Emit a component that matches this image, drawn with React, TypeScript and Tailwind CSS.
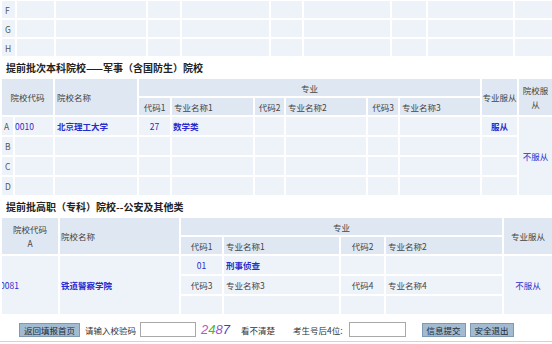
import React from 'react'

// cell backgrounds
const TD = 'border-2 border-white bg-[#eef3fa] p-0 align-middle'
const TH = 'border-2 border-white bg-[#dfe8f2] p-0 font-normal text-[#444] align-middle'
const LINK = 'text-[#2a2acc]'

function TopRows() {
  const widths = [15, 39, 92, 34, 89, 33, 88, 36, 87, 39]
  return (
    <table className="table-fixed border-collapse w-[552px] -mt-[1px]">
      <colgroup>
        {widths.map((w, i) => (
          <col key={i} style={{ width: w }} />
        ))}
      </colgroup>
      <tbody>
        {['F', 'G', 'H'].map((l) => (
          <tr key={l} className="h-[19px]">
            <td className={`${TD} pl-[3px] text-[#555]`}>{l}</td>
            {widths.slice(1).map((_, i) => (
              <td key={i} className={TD} />
            ))}
          </tr>
        ))}
      </tbody>
    </table>
  )
}

function Title({ children }: { children: React.ReactNode }) {
  return (
    <div className="h-[19px] flex items-center pl-[6px] text-[10px] font-bold text-[#222]">
      {children}
    </div>
  )
}

function MilitaryTable() {
  const widths = [13, 40, 84, 33, 83, 31, 82, 32, 82, 37, 35]
  const emptyRow = (l: string) => (
    <tr key={l} className="h-[20px]">
      <td className={`${TD} pl-[3px] text-[#555]`}>{l}</td>
      {[0, 1, 2, 3, 4, 5, 6, 7, 8].map((i) => (
        <td key={i} className={TD} />
      ))}
    </tr>
  )
  return (
    <table className="table-fixed border-collapse w-[552px]">
      <colgroup>
        {widths.map((w, i) => (
          <col key={i} style={{ width: w }} />
        ))}
      </colgroup>
      <thead>
        <tr className="h-[19px]">
          <th rowSpan={2} colSpan={2} className={`${TH} text-center`}>院校代码</th>
          <th rowSpan={2} className={`${TH} text-left pl-[2px]`}>院校名称</th>
          <th colSpan={6} className={`${TH} text-center`}>专业</th>
          <th rowSpan={2} className={`${TH} text-center`}>专业服从</th>
          <th rowSpan={2} className={`${TH} text-center px-[2px] leading-[14px]`}>院校服从</th>
        </tr>
        <tr className="h-[19px]">
          <th className={`${TH} text-center`}>代码1</th>
          <th className={`${TH} text-left pl-[2px]`}>专业名称1</th>
          <th className={`${TH} text-center`}>代码2</th>
          <th className={`${TH} text-left pl-[2px]`}>专业名称2</th>
          <th className={`${TH} text-center`}>代码3</th>
          <th className={`${TH} text-left pl-[2px]`}>专业名称3</th>
        </tr>
      </thead>
      <tbody>
        <tr className="h-[20px]">
          <td className={`${TD} pl-[2px] text-[#555]`}>A</td>
          <td className={`${TD} ${LINK}`}>0010</td>
          <td className={`${TD} ${LINK} pl-[2px] font-bold`}>北京理工大学</td>
          <td className={`${TD} ${LINK} text-center`}>27</td>
          <td className={`${TD} ${LINK} pl-[1px] font-bold`}>数学类</td>
          <td className={TD} />
          <td className={TD} />
          <td className={TD} />
          <td className={TD} />
          <td className={`${TD} ${LINK} text-center font-bold`}>服从</td>
          <td rowSpan={4} className={`${TD} ${LINK} text-center`}>不服从</td>
        </tr>
        {['B', 'C', 'D'].map(emptyRow)}
      </tbody>
    </table>
  )
}

function PoliceTable() {
  const widths = [58, 121, 43, 117, 45, 118, 50]
  return (
    <table className="table-fixed border-collapse w-[552px]">
      <colgroup>
        {widths.map((w, i) => (
          <col key={i} style={{ width: w }} />
        ))}
      </colgroup>
      <thead>
        <tr className="h-[19px]">
          <th rowSpan={2} className={`${TH} text-center leading-[14px]`}>
            院校代码
            <br />A
          </th>
          <th rowSpan={2} className={`${TH} text-left pl-[1px]`}>院校名称</th>
          <th colSpan={4} className={`${TH} text-center`}>专业</th>
          <th rowSpan={2} className={`${TH} text-center`}>专业服从</th>
        </tr>
        <tr className="h-[19px]">
          <th className={`${TH} text-center`}>代码1</th>
          <th className={`${TH} text-left pl-[2px]`}>专业名称1</th>
          <th className={`${TH} text-center`}>代码2</th>
          <th className={`${TH} text-left pl-[2px]`}>专业名称2</th>
        </tr>
      </thead>
      <tbody>
        <tr className="h-[20px]">
          <td rowSpan={3} className={`${TD} ${LINK} overflow-hidden`}>
            <span className="-ml-[2px]">0081</span>
          </td>
          <td rowSpan={3} className={`${TD} ${LINK} pl-[1px] font-bold`}>铁道警察学院</td>
          <td className={`${TD} ${LINK} text-center`}>01</td>
          <td className={`${TD} ${LINK} pl-[2px] font-bold`}>刑事侦查</td>
          <td className={TD} />
          <td className={TD} />
          <td rowSpan={3} className={`${TD} ${LINK} text-center`}>不服从</td>
        </tr>
        <tr className="h-[20px]">
          <td className={`${TD} text-center text-[#444]`}>代码3</td>
          <td className={`${TD} pl-[2px] text-[#444]`}>专业名称3</td>
          <td className={`${TD} text-center text-[#444]`}>代码4</td>
          <td className={`${TD} pl-[2px] text-[#444]`}>专业名称4</td>
        </tr>
        <tr className="h-[20px]">
          <td className={TD} />
          <td className={TD} />
          <td className={TD} />
          <td className={TD} />
        </tr>
      </tbody>
    </table>
  )
}

function Btn({ children, className = '' }: { children: React.ReactNode; className?: string }) {
  return (
    <button
      className={`h-[14px] px-[3px] bg-[#a2bbd0] border border-[#7d9ab2] text-[#1c2a3a] text-[8.5px] leading-[12px] ${className}`}
    >
      {children}
    </button>
  )
}

function Toolbar() {
  return (
    <div className="h-[26px] border-b border-[#c6d6e6] flex items-center text-[#333] pt-[2px]">
      <Btn className="ml-[19px] w-[61px]">返回填报首页</Btn>
      <span className="ml-[5px]">请输入校验码</span>
      <input className="ml-[4px] w-[56px] h-[15px] border border-[#a8a8a8] bg-white" />
      <span className="ml-[5px] w-[34px] text-[13px] italic leading-none font-['Liberation_Sans',sans-serif]">
        <span className="text-[#b455c8]">2</span>
        <span className="text-[#3dbb3d]">4</span>
        <span className="text-[#9a55d2]">8</span>
        <span className="text-[#3b3bd6]">7</span>
      </span>
      <span className="ml-[6px]">看不清楚</span>
      <span className="ml-[18px]">考生号后4位:</span>
      <input className="ml-[6px] w-[57px] h-[15px] border border-[#a8a8a8] bg-white" />
      <Btn className="ml-[16px] w-[44px]">信息提交</Btn>
      <Btn className="ml-[4px] w-[44px]">安全退出</Btn>
    </div>
  )
}

export default function App() {
  return (
    <div className="w-[552px] h-[344px] overflow-hidden bg-white text-[8.5px] leading-[12px] font-['Noto_Sans_CJK_SC','Noto_Sans',sans-serif]">
      <TopRows />
      <Title>提前批次本科院校——军事（含国防生）院校</Title>
      <MilitaryTable />
      <Title>提前批高职（专科）院校--公安及其他类</Title>
      <PoliceTable />
      <Toolbar />
    </div>
  )
}
